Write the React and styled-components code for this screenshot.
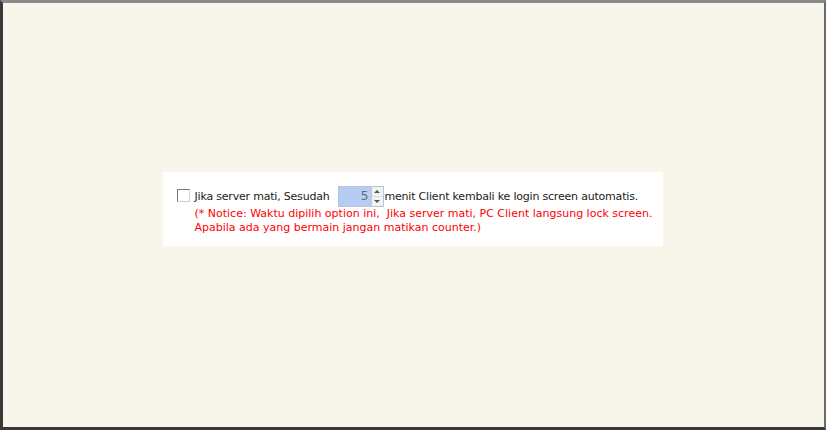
import React from "react";
import styled, { createGlobalStyle } from "styled-components";

const Global = createGlobalStyle`
  html, body {
    margin: 0;
    padding: 0;
    background: #f8f6ea;
  }
`;

const Frame = styled.div`
  width: 826px;
  height: 430px;
  box-sizing: border-box;
  background: #f8f6ea;
  border-left: 3px solid #3a3a3a;
  border-top: 3px solid #8a8a8a;
  border-right: 2px solid #6a6a6a;
  border-bottom: 3px solid #3a3a3a;
  display: flex;
  align-items: center;
  justify-content: center;
  font-family: Tahoma, "DejaVu Sans", Verdana, sans-serif;
  font-size: 11px;
`;

const Panel = styled.div`
  width: 500px;
  height: 74px;
  box-sizing: border-box;
  background: #ffffff;
  margin: 0 2px 12px 0;
  padding: 14px 0 0 14px;
  display: flex;
  gap: 5px;
`;

const Box = styled.span`
  width: 11px;
  height: 11px;
  margin-top: 3px;
  flex: none;
  border: 1px solid #7a7a7a;
  border-right-color: #d0d0d0;
  border-bottom-color: #d0d0d0;
  background: #fff;
`;

const Body = styled.div`
  display: flex;
  flex-direction: column;
`;

const Line = styled.div`
  display: flex;
  align-items: center;
  color: ${(p) => p.color || "#1a1a1a"};
  line-height: 14px;
  white-space: pre;
  letter-spacing: ${(p) => p.tight ? "-0.2px" : "0"};
`;

const Spin = styled.span`
  display: flex;
  margin: 0 1px 0 8px;
  height: 19px;
  border: 1px solid #b8c4d8;
  letter-spacing: 0;
`;

const SpinValue = styled.span`
  width: 30px;
  padding-right: 2px;
  text-align: right;
  line-height: 19px;
  color: #6a6a6a;
  font-size: 12px;
  background: #b5cdf3;
`;

const SpinBtns = styled.span`
  width: 11px;
  display: flex;
  flex-direction: column;
  border-left: 1px solid #c8c8c8;
  background: #f2f2f2;
`;

const Arrow = styled.span`
  flex: 1;
  display: flex;
  align-items: center;
  justify-content: center;
  &:first-child {
    border-bottom: 1px solid #d8d8d8;
  }
  &::after {
    content: "";
    border-left: 3px solid transparent;
    border-right: 3px solid transparent;
    ${(p) =>
      p.up
        ? "border-bottom: 3px solid #555;"
        : "border-top: 3px solid #555;"}
  }
`;

export default function App() {
  return (
    <>
      <Global />
      <Frame>
        <Panel>
          <Box />
          <Body>
            <Line tight>
              Jika server mati, Sesudah
              <Spin>
                <SpinValue>5</SpinValue>
                <SpinBtns>
                  <Arrow up />
                  <Arrow />
                </SpinBtns>
              </Spin>
              menit Client kembali ke login screen automatis.
            </Line>
            <Line color="#ff0000">
              (* Notice: Waktu dipilih option ini,  Jika server mati, PC Client langsung lock screen.
            </Line>
            <Line color="#ff0000">Apabila ada yang bermain jangan matikan counter.)</Line>
          </Body>
        </Panel>
      </Frame>
    </>
  );
}
